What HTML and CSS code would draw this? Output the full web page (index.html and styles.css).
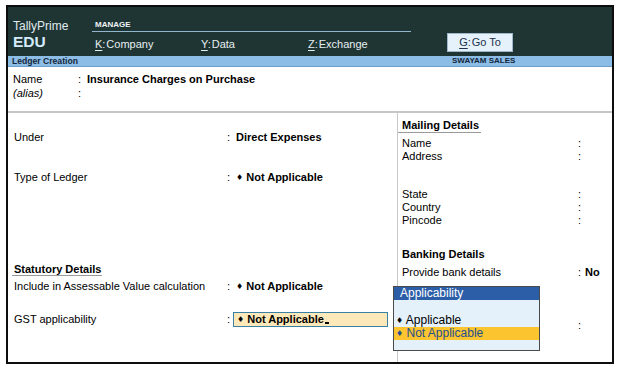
FILE: index.html
```html
<!DOCTYPE html>
<html>
<head>
<meta charset="utf-8">
<title>Ledger Creation</title>
<link rel="stylesheet" href="styles.css">
</head>
<body>
<div class="frame">
  <header class="topbar">
    <div class="brand">
      <div class="product">TallyPrime</div>
      <div class="edition">EDU</div>
    </div>
    <nav class="menu">
      <div class="menu-title">MANAGE</div>
      <div class="menu-items">
        <span class="menu-item"><u>K</u>:&#8202;Company</span>
        <span class="menu-item"><u>Y</u>:&#8202;Data</span>
        <span class="menu-item"><u>Z</u>:&#8202;Exchange</span>
      </div>
    </nav>
    <div class="goto"><u>G</u>:&#8202;Go To</div>
  </header>

  <div class="titlebar">
    <span>Ledger Creation</span>
    <span class="company">SWAYAM SALES</span>
  </div>

  <section class="identity">
    <div class="id-row"><span class="id-label">Name</span><span class="id-sep">:</span><span class="id-value">Insurance Charges on Purchase</span></div>
    <div class="id-row"><span class="id-label alias">(alias)</span><span class="id-sep">:</span><span class="id-value"></span></div>
  </section>

  <section class="main">
    <div class="left">
      <div class="row r-under"><span class="label">Under</span><span class="sep">:</span><span class="value">Direct Expenses</span></div>
      <div class="row r-type"><span class="label">Type of Ledger</span><span class="sep">:</span><span class="value"><span class="dia">&#9830;</span> Not Applicable</span></div>
      <div class="heading h-stat"><span>Statutory Details</span></div>
      <div class="row r-incl"><span class="label">Include in Assessable Value calculation</span><span class="sep">:</span><span class="value"><span class="dia">&#9830;</span> Not Applicable</span></div>
      <div class="row r-gst"><span class="label">GST applicability</span><span class="sep sep-narrow">:</span><span class="gst-box"><span class="dia">&#9830;</span> Not Applicable<span class="cursor"></span></span></div>
    </div>
    <div class="right">
      <div class="heading h-mail"><span>Mailing Details</span></div>
      <div class="rrow r-name"><span class="rlabel">Name</span><span>:</span></div>
      <div class="rrow"><span class="rlabel">Address</span><span>:</span></div>
      <div class="rrow r-state"><span class="rlabel">State</span><span>:</span></div>
      <div class="rrow"><span class="rlabel">Country</span><span>:</span></div>
      <div class="rrow"><span class="rlabel">Pincode</span><span>:</span></div>
      <div class="bank-title">Banking Details</div>
      <div class="rrow r-bank"><span class="rlabel">Provide bank details</span><span>:</span><span class="rvalue">No</span></div>
      <div class="rrow r-last"><span class="rlabel"></span><span>:</span></div>
    </div>
  </section>

  <div class="popup">
    <div class="popup-head">Applicability</div>
    <div class="popup-body">
      <div class="opt"><span class="dia">&#9830;</span> Applicable</div>
      <div class="opt opt-sel"><span class="dia">&#9830;</span> Not Applicable</div>
    </div>
  </div>
</div>
</body>
</html>
```

FILE: styles.css
```css
* { box-sizing: border-box; }

body {
  margin: 0;
  background: #ffffff;
  font-family: "Liberation Sans", Arial, sans-serif;
  font-size: 11px;
  color: #000;
}

.frame {
  position: relative;
  margin: 5px 0 0 6px;
  width: 608px;
  height: 359px;
  border: 2px solid #0d0d0d;
  display: flex;
  flex-direction: column;
}

/* top bar */
.topbar {
  height: 49px;
  background: #1f3533;
  display: flex;
  color: #e6eef2;
  flex-shrink: 0;
}

.brand { width: 84px; padding: 12px 0 0 5px; }
.product { font-size: 12px; line-height: 14px; color: #e0eaf0; }
.edition { font-size: 15.5px; font-weight: bold; line-height: 17px; color: #d3ebfa; }

.menu { width: 319px; padding-top: 12.5px; }
.menu-title {
  font-size: 8px;
  font-weight: bold;
  line-height: 10px;
  padding: 0 0 1.5px 3px;
  border-bottom: 1px solid #93b6cf;
  color: #eef3f6;
}
.menu-items {
  display: grid;
  grid-template-columns: 106px 107px auto;
  padding: 6px 0 0 3px;
  font-size: 11px;
  line-height: 13px;
}
.menu-item u, .goto u { text-underline-offset: 2px; }

.goto {
  margin: 26px 0 0 36px;
  width: 66px;
  height: 19px;
  background: #e5f1fb;
  border: 1px solid #9fb8cc;
  color: #1c324a;
  text-align: center;
  line-height: 17px;
  font-size: 11px;
}

/* title bar */
.titlebar {
  height: 11px;
  flex-shrink: 0;
  background: #8cbde6;
  border-bottom: 1px solid #6d9fcb;
  display: grid;
  grid-template-columns: 440px auto;
  font-size: 8.6px;
  font-weight: bold;
  line-height: 10px;
  color: #13263b;
  padding-left: 4px;
}
.company { font-size: 8px; }

/* name section */
.identity {
  height: 46px;
  flex-shrink: 0;
  padding: 4.5px 0 0 5px;
  border-bottom: 2px solid #c6c6c6;
}
.id-row { display: flex; line-height: 14px; }
.id-label { width: 65px; }
.alias { font-style: italic; }
.id-sep { width: 9px; }
.id-value { font-weight: bold; }

/* main */
.main {
  flex: 1;
  display: grid;
  grid-template-columns: 390px 1fr;
}

.left {
  border-right: 1px solid #c8c8c8;
  padding: 17.5px 0 0 6px;
}

.row { display: flex; align-items: center; line-height: 13px; }
.label { width: 213px; }
.sep { width: 9px; }
.sep-narrow { width: 6px; }
.value { font-weight: bold; }
.dia {
  font-family: "DejaVu Sans", sans-serif;
  font-size: 8px;
  font-weight: normal;
  vertical-align: 1px;
}

.r-type { margin-top: 27px; }
.h-stat { margin-top: 79.5px; }
.r-incl { margin-top: 4px; }
.r-gst { margin-top: 18.5px; }

.heading { line-height: 12px; font-weight: bold; }
.heading span {
  display: inline-block;
  margin-left: -2px;
  padding: 0 1px 0 2px;
  border-bottom: 1px solid #9a9a9a;
}

.gst-box {
  width: 155px;
  height: 15px;
  border: 1px solid #3a7fa4;
  background: #fde8b9;
  padding-left: 3px;
  line-height: 13px;
  font-weight: bold;
}
.cursor {
  display: inline-block;
  width: 4px;
  height: 2px;
  background: #000;
  margin-left: 1px;
  vertical-align: -1px;
}

/* right column */
.right { padding: 5.5px 0 0 4px; }
.h-mail { line-height: 13px; }
.h-mail span { margin-left: -4px; padding: 0 2px 0 4px; }
.rrow { display: flex; line-height: 13px; }
.rlabel { width: 176px; }
.rvalue { margin-left: 4px; font-weight: bold; }
.r-name { margin-top: 4px; }
.r-state { margin-top: 25px; }
.bank-title { margin-top: 21px; line-height: 13px; font-weight: bold; }
.r-bank { margin-top: 5px; }
.r-last { margin-top: 40px; }

/* popup */
.popup {
  position: absolute;
  left: 385px;
  top: 279px;
  width: 147px;
  height: 65px;
  border: 1px solid #4a4a4a;
  background: #e4f1fb;
  font-size: 12px;
}
.popup-head {
  height: 13px;
  background: #2b5ea7;
  color: #fff;
  line-height: 13px;
  padding-left: 6px;
}
.popup-body { padding-top: 14px; }
.opt { height: 13px; line-height: 13px; padding-left: 2px; }
.opt-sel { background: #fcc42f; color: #234f90; }
```
